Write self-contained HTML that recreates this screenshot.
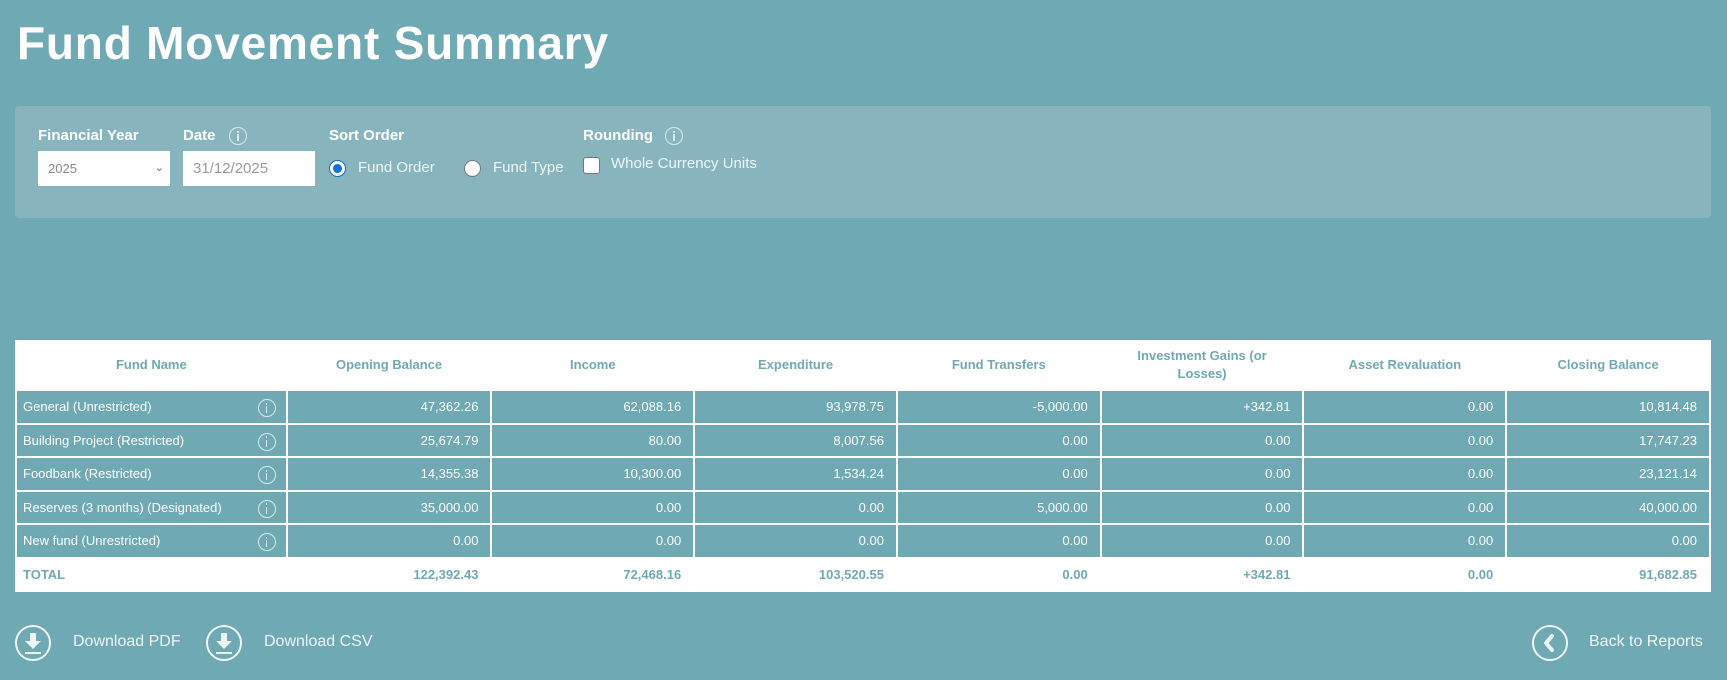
<!DOCTYPE html>
<html><head><meta charset="utf-8"><style>
*{box-sizing:border-box;margin:0;padding:0}
body{width:1727px;height:680px;background:#6fa9b4;font-family:"Liberation Sans",sans-serif;color:#fff;position:relative;overflow:hidden}
.abs{position:absolute;white-space:nowrap}
h1{position:absolute;left:17px;top:15px;font-size:46px;font-weight:bold;letter-spacing:0.8px;line-height:56px}
.panel{position:absolute;left:15px;top:106px;width:1696px;height:112px;background:#88b5bd;border-radius:4px}
.lbl{font-size:15px;font-weight:bold;line-height:18px}
.inp{position:absolute;background:#fff;color:#888;font-size:13px;line-height:35px;padding-left:10px}
.txt{font-size:15px;line-height:18px;color:#eef6f7}
.info{position:absolute;width:18px;height:18px;border:1.3px solid #d8e9ec;border-radius:50%}
.info:before{content:"";position:absolute;left:7px;top:2.5px;width:1.6px;height:2px;background:#d8e9ec}
.info:after{content:"";position:absolute;left:7px;top:6px;width:1.6px;height:7px;background:#d8e9ec}
table{position:absolute;left:15px;top:340px;width:1696px;border-collapse:collapse;background:#fff}
th{color:#6fa9b4;font-size:13px;font-weight:bold;height:50px;text-align:center;line-height:18px}
td{background:#6fa9b4;border:2px solid #fff;height:33.5px;font-size:13px;text-align:right;padding-right:12px;color:#fff;position:relative}
td.n{text-align:left;padding-left:6px}
tr.tot td{background:#fff;color:#6fa9b4;font-weight:bold;border-color:#fff}
</style></head><body>
<h1>Fund Movement Summary</h1>
<div class="panel"></div>
<div class="abs lbl" style="left:38px;top:127px">Financial Year</div>
<div class="abs lbl" style="left:183px;top:127px">Date</div>
<div class="info" style="left:229px;top:127px"></div>
<div class="abs lbl" style="left:329px;top:127px">Sort Order</div>
<div class="abs lbl" style="left:583px;top:127px">Rounding</div>
<div class="info" style="left:665px;top:127px"></div>
<div class="inp" style="left:38px;top:151px;width:132px;height:35px">2025<span style="position:absolute;right:6px;top:0;color:#666;font-size:11px">&#8964;</span></div>
<div class="inp" style="left:183px;top:151px;width:132px;height:35px;font-size:15px;color:#999">31/12/2025</div>
<div class="abs" style="left:329px;top:160px;width:17px;height:17px;border-radius:50%;background:#fff;border:1px solid #0a6fd0"><div style="position:absolute;left:3px;top:3px;width:9px;height:9px;border-radius:50%;background:#0a72d8"></div></div>
<div class="abs txt" style="left:358px;top:159px">Fund Order</div>
<div class="abs" style="left:464px;top:160px;width:17px;height:17px;border-radius:50%;background:#fff;border:1px solid #777"></div>
<div class="abs txt" style="left:493px;top:159px">Fund Type</div>
<div class="abs" style="left:583px;top:157px;width:17px;height:17px;border-radius:3px;background:#fff;border:1px solid #777"></div>
<div class="abs txt" style="left:611px;top:155px">Whole Currency Units</div>
<table>
<colgroup><col style="width:271px"><col style="width:205px"><col style="width:203px"><col style="width:203px"><col style="width:204px"><col style="width:203px"><col style="width:203px"><col style="width:204px"></colgroup>
<tr><th>Fund Name</th><th>Opening Balance</th><th>Income</th><th>Expenditure</th><th>Fund Transfers</th><th>Investment Gains (or<br>Losses)</th><th>Asset Revaluation</th><th>Closing Balance</th></tr>
<tr><td class="n">General (Unrestricted)<span class="info" style="right:10px;top:8px"></span></td><td>47,362.26</td><td>62,088.16</td><td>93,978.75</td><td>-5,000.00</td><td>+342.81</td><td>0.00</td><td>10,814.48</td></tr>
<tr><td class="n">Building Project (Restricted)<span class="info" style="right:10px;top:8px"></span></td><td>25,674.79</td><td>80.00</td><td>8,007.56</td><td>0.00</td><td>0.00</td><td>0.00</td><td>17,747.23</td></tr>
<tr><td class="n">Foodbank (Restricted)<span class="info" style="right:10px;top:8px"></span></td><td>14,355.38</td><td>10,300.00</td><td>1,534.24</td><td>0.00</td><td>0.00</td><td>0.00</td><td>23,121.14</td></tr>
<tr><td class="n">Reserves (3 months) (Designated)<span class="info" style="right:10px;top:8px"></span></td><td>35,000.00</td><td>0.00</td><td>0.00</td><td>5,000.00</td><td>0.00</td><td>0.00</td><td>40,000.00</td></tr>
<tr><td class="n">New fund (Unrestricted)<span class="info" style="right:10px;top:8px"></span></td><td>0.00</td><td>0.00</td><td>0.00</td><td>0.00</td><td>0.00</td><td>0.00</td><td>0.00</td></tr>
<tr class="tot"><td class="n">TOTAL</td><td>122,392.43</td><td>72,468.16</td><td>103,520.55</td><td>0.00</td><td>+342.81</td><td>0.00</td><td>91,682.85</td></tr>
</table>
<svg class="abs" style="left:14px;top:624px" width="38" height="38" viewBox="0 0 38 38"><circle cx="19" cy="19" r="17" fill="none" stroke="#eef6f7" stroke-width="2"/><path d="M16 9h6v8h5l-8 8-8-8h5z" fill="#eef6f7"/><rect x="11" y="28" width="16" height="2" fill="#eef6f7"/></svg>
<div class="abs" style="left:73px;top:633px;font-size:16px;color:#eef6f7">Download PDF</div>
<svg class="abs" style="left:205px;top:624px" width="38" height="38" viewBox="0 0 38 38"><circle cx="19" cy="19" r="17" fill="none" stroke="#eef6f7" stroke-width="2"/><path d="M16 9h6v8h5l-8 8-8-8h5z" fill="#eef6f7"/><rect x="11" y="28" width="16" height="2" fill="#eef6f7"/></svg>
<div class="abs" style="left:264px;top:633px;font-size:16px;color:#eef6f7">Download CSV</div>
<svg class="abs" style="left:1531px;top:624px" width="38" height="38" viewBox="0 0 38 38"><circle cx="19" cy="19" r="17" fill="none" stroke="#eef6f7" stroke-width="2"/><path d="M21 12l-6 7 6 7" fill="none" stroke="#eef6f7" stroke-width="4" stroke-linecap="round" stroke-linejoin="round"/></svg>
<div class="abs" style="left:1589px;top:633px;font-size:16px;color:#eef6f7">Back to Reports</div>
</body></html>
